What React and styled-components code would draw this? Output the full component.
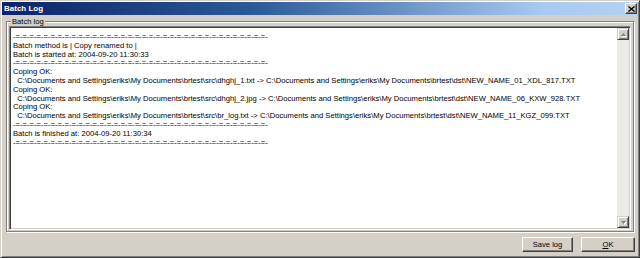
import React from "react";
import styled, { createGlobalStyle } from "styled-components";

const Global = createGlobalStyle`
  html, body { margin: 0; padding: 0; background: #d4d0c8; }
  body { font-family: "Liberation Sans", Arial, sans-serif; }
  * { box-sizing: border-box; }
`;

const Window = styled.div`
  width: 640px;
  height: 258px;
  background: #d4d0c8;
  border: 1px solid;
  border-color: #d4d0c8 #404040 #404040 #d4d0c8;
  box-shadow: inset 1px 1px 0 #ffffff, inset -1px -1px 0 #808080;
  padding: 1px;
  display: flex;
  flex-direction: column;
`;

const TitleBar = styled.div`
  height: 13px;
  flex: none;
  display: flex;
  align-items: center;
  justify-content: space-between;
  padding: 0 1px 0 2px;
  background: linear-gradient(to right, #0a246a 0%, #2d5a9a 40%, #a6caf0 85%, #b4d2f2 100%);
`;

const Title = styled.span`
  color: #ffffff;
  font-weight: bold;
  font-size: 8px;
  line-height: 13px;
  font-family: "Liberation Sans", Arial, sans-serif;
`;

const CaptionButton = styled.div`
  width: 12px;
  height: 11px;
  background: #d4d0c8;
  border: 1px solid;
  border-color: #ffffff #404040 #404040 #ffffff;
  box-shadow: inset -1px -1px 0 #808080;
  display: flex;
  align-items: center;
  justify-content: center;
`;

const Body = styled.div`
  flex: 1;
  display: flex;
  flex-direction: column;
  padding: 2px 2px 4px 2px;
  min-height: 0;
`;

const Group = styled.fieldset`
  flex: 1;
  margin: 0 2px;
  padding: 0 2px 1px 2px;
  border: 1px solid #808080;
  box-shadow: 1px 1px 0 #ffffff, inset 1px 1px 0 #ffffff;
  display: flex;
  flex-direction: column;
  min-height: 0;
`;

const Legend = styled.legend`
  font-size: 7.6px;
  line-height: 9px;
  padding: 0 1px;
  margin-left: 2px;
  background: #d4d0c8;
  color: #000;
`;

const LogBox = styled.div`
  flex: 1;
  display: flex;
  background: #ffffff;
  border: 1px solid;
  border-color: #808080 #ffffff #ffffff #808080;
  box-shadow: inset 1px 1px 0 #404040, inset -1px -1px 0 #d4d0c8;
  padding: 1px;
  min-height: 0;
`;

const LogText = styled.div`
  flex: 1;
  padding: 5px 2px 3px 2px;
  font-size: 7.65px;
  line-height: 8.8px;
  color: #000;
  white-space: pre;
  overflow: hidden;
`;

const Scrollbar = styled.div`
  width: 12px;
  flex: none;
  display: flex;
  flex-direction: column;
  justify-content: space-between;
  background-color: #eceae6;
`;

const ScrollButton = styled.div`
  width: 12px;
  height: 12px;
  background: #d4d0c8;
  border: 1px solid;
  border-color: #d4d0c8 #404040 #404040 #d4d0c8;
  box-shadow: inset 1px 1px 0 #ffffff, inset -1px -1px 0 #808080;
  display: flex;
  align-items: center;
  justify-content: center;
`;

const ButtonRow = styled.div`
  flex: none;
  display: flex;
  justify-content: flex-end;
  gap: 8px;
  padding: 5px 1px 0 0;
`;

const Button = styled.button`
  width: ${(p) => p.$w}px;
  height: 15px;
  padding: 0;
  margin: 0;
  background: #d4d0c8;
  border: 1px solid;
  border-color: #ffffff #404040 #404040 #ffffff;
  box-shadow: inset -1px -1px 0 #808080, inset 1px 1px 0 #d4d0c8;
  font-family: "Liberation Sans", Arial, sans-serif;
  font-size: 7.6px;
  color: #000;
  line-height: 12px;
`;

const Key = styled.span`
  text-decoration: underline;
`;

const Arrow = ({ up }) => (
  <svg width="7" height="5" viewBox="0 0 7 5">
    {up ? (
      <>
        <polygon points="3.5,1 6,4 1,4" fill="#ffffff" transform="translate(1,1)" />
        <polygon points="3.5,1 6,4 1,4" fill="#808080" />
      </>
    ) : (
      <>
        <polygon points="1,1 6,1 3.5,4" fill="#ffffff" transform="translate(1,1)" />
        <polygon points="1,1 6,1 3.5,4" fill="#808080" />
      </>
    )}
  </svg>
);

const DASH = "-=".repeat(36) + "-";
const BASE = "C:\\Documents and Settings\\eriks\\My Documents\\brtest\\";

const lines = [
  DASH,
  "Batch method is | Copy renamed to |",
  "Batch is started at: 2004-09-20 11:30:33",
  DASH,
  "Coping OK:",
  "  " + BASE + "src\\dhghj_1.txt -> " + BASE + "dst\\NEW_NAME_01_XDL_817.TXT",
  "Coping OK:",
  "  " + BASE + "src\\dhghj_2.jpg -> " + BASE + "dst\\NEW_NAME_06_KXW_928.TXT",
  "Coping OK:",
  "  " + BASE + "src\\br_log.txt -> " + BASE + "dst\\NEW_NAME_11_KGZ_099.TXT",
  DASH,
  "Batch is finished at: 2004-09-20 11:30:34",
  DASH,
];

export default function App() {
  return (
    <>
      <Global />
      <Window>
        <TitleBar>
          <Title>Batch Log</Title>
          <CaptionButton>
            <svg width="7" height="6" viewBox="0 0 7 6">
              <path d="M0.5 0.5 L6.5 5.5 M6.5 0.5 L0.5 5.5" stroke="#000" strokeWidth="1.4" />
            </svg>
          </CaptionButton>
        </TitleBar>
        <Body>
          <Group>
            <Legend>Batch log</Legend>
            <LogBox>
              <LogText>
                {lines.map((l, i) => (
                  <div key={i}>{l}</div>
                ))}
              </LogText>
              <Scrollbar>
                <ScrollButton>
                  <Arrow up />
                </ScrollButton>
                <ScrollButton>
                  <Arrow />
                </ScrollButton>
              </Scrollbar>
            </LogBox>
          </Group>
          <ButtonRow>
            <Button $w={51}>Save log</Button>
            <Button $w={54}>
              <Key>O</Key>K
            </Button>
          </ButtonRow>
        </Body>
      </Window>
    </>
  );
}
